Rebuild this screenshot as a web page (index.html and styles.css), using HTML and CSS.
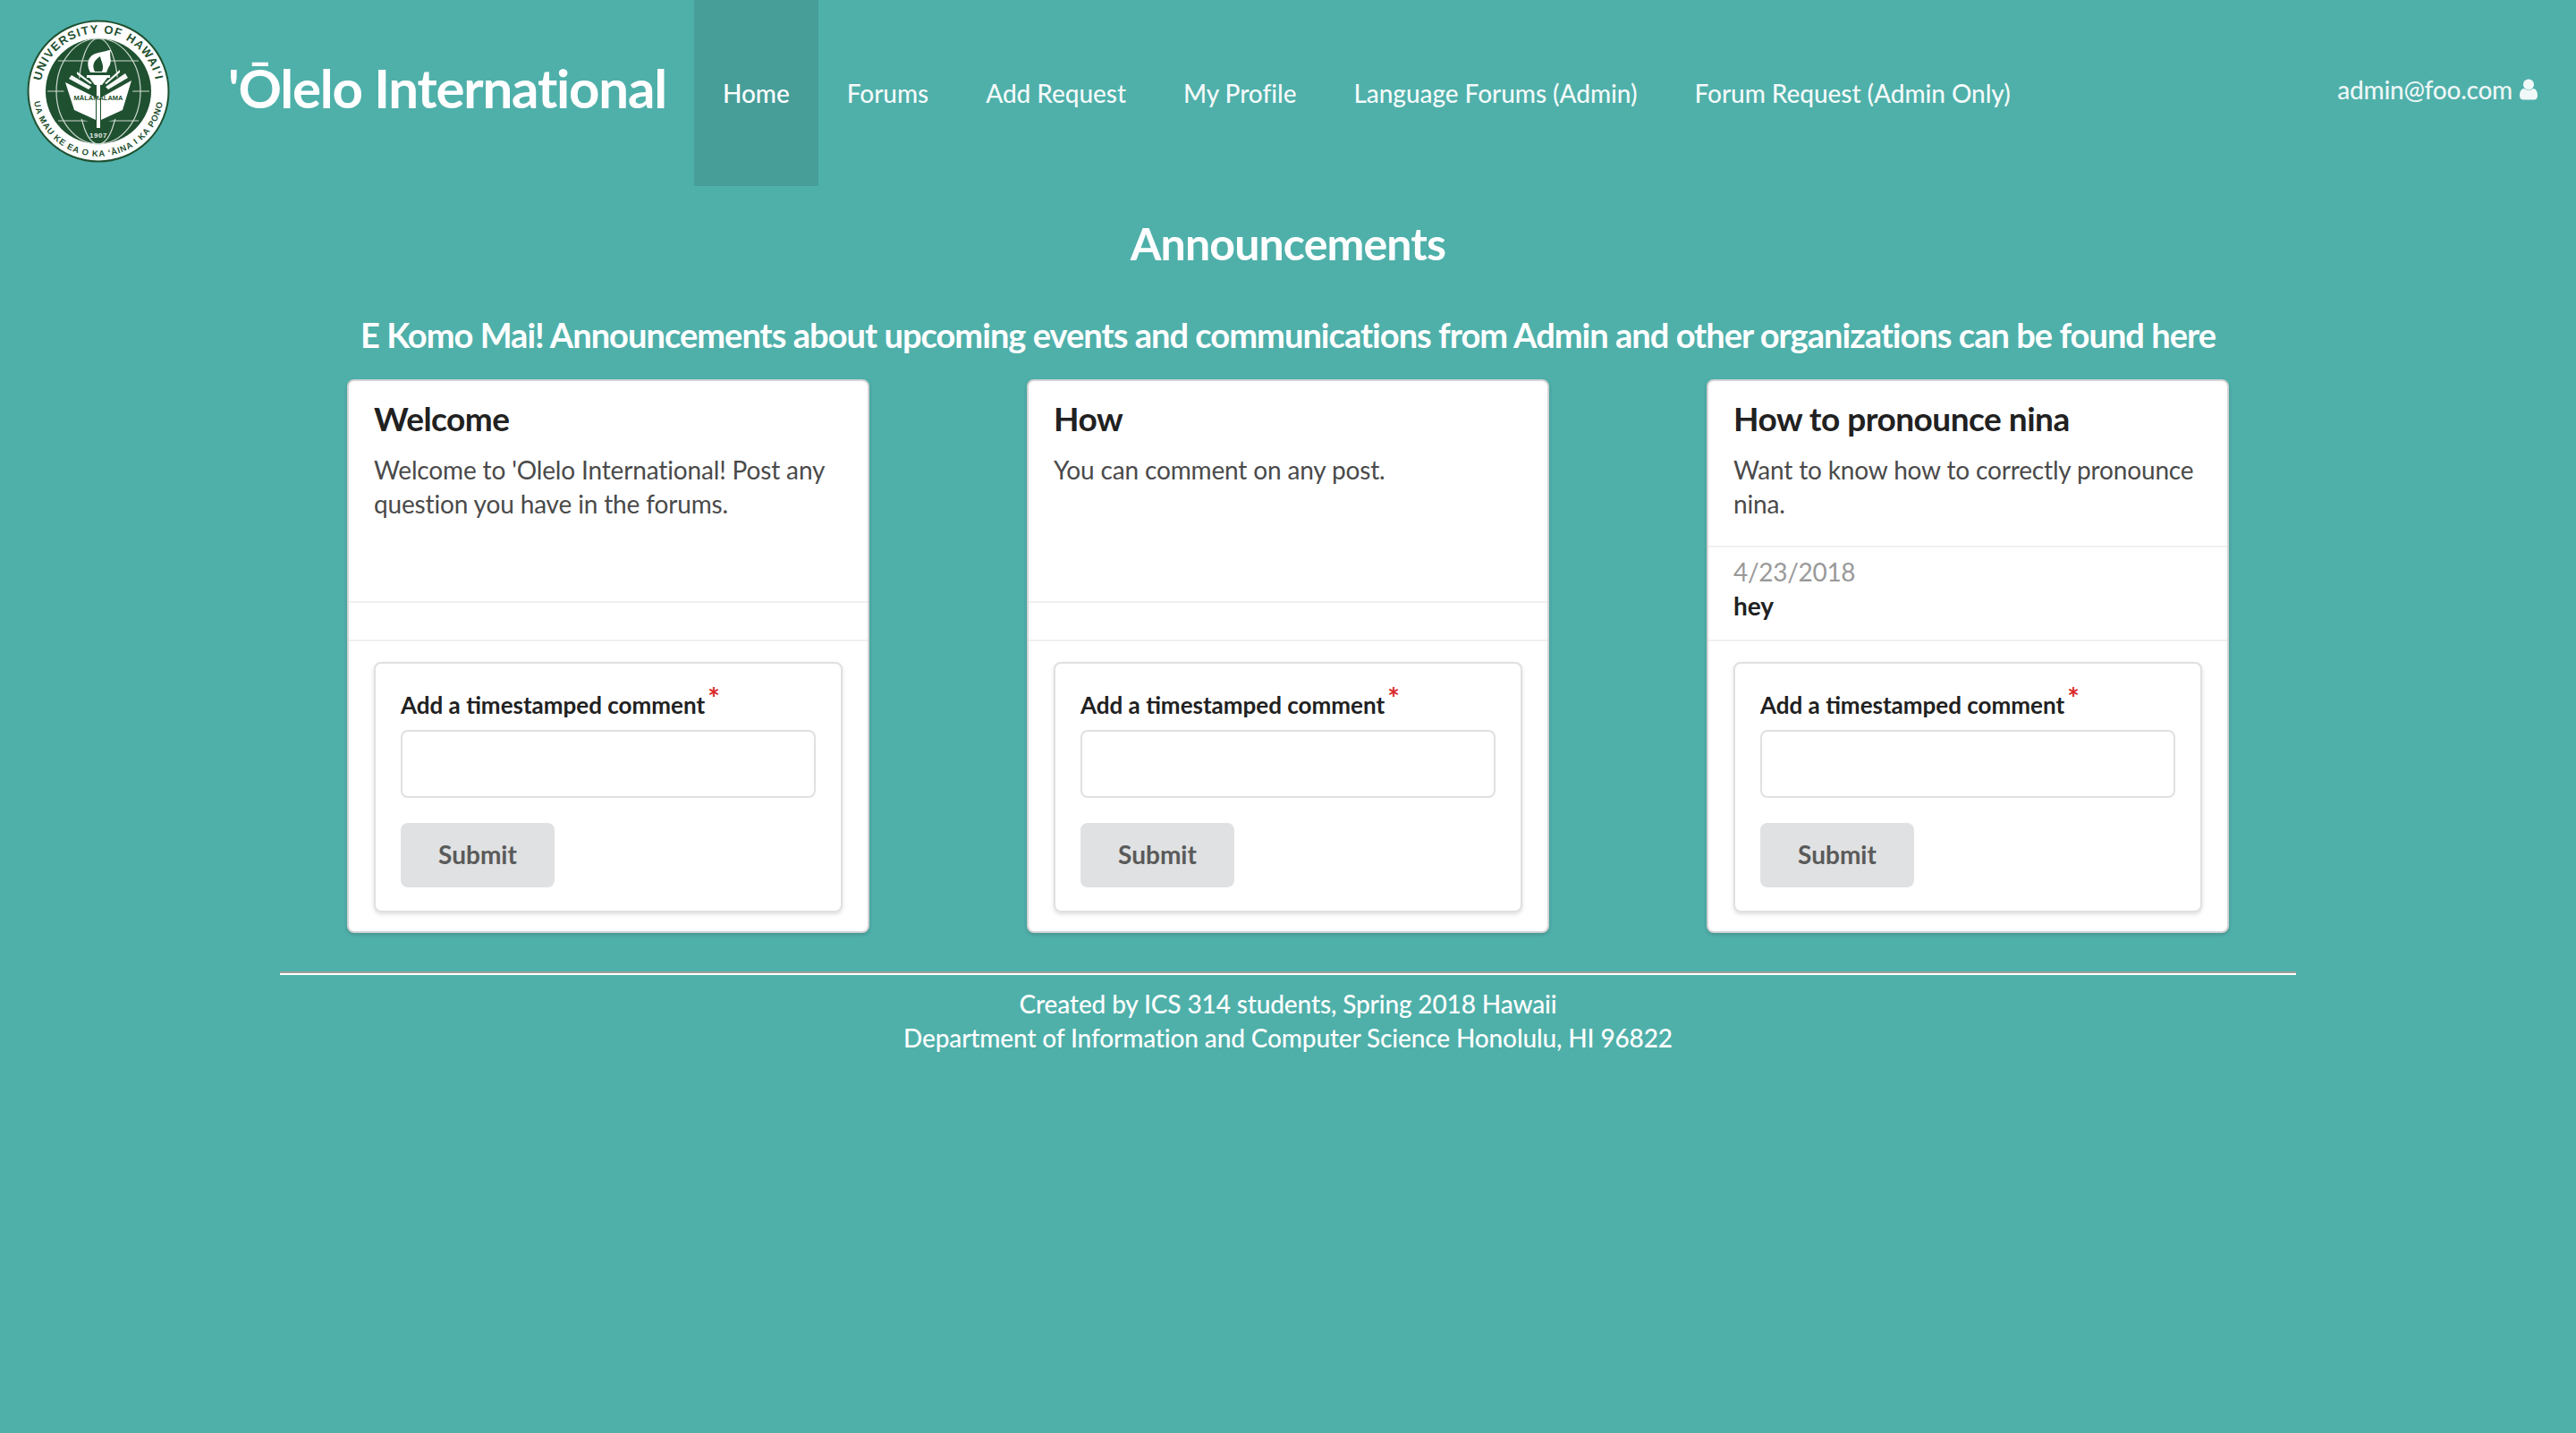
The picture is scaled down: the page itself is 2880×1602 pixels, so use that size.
FILE: index.html
```html
<!DOCTYPE html>
<html lang="en">
<head>
<meta charset="utf-8">
<title>'Ōlelo International</title>
<link rel="stylesheet" href="styles.css">
</head>
<body>
<nav class="navbar">
  <div class="brand">
    <svg class="seal" viewBox="0 0 160 160" width="160" height="160">
      <defs>
        <path id="arcTop" d="M15 80 A65 65 0 0 1 145 80"/>
        <path id="arcBottom" d="M7 80 A73 73 0 0 0 153 80"/>
      </defs>
      <circle cx="80" cy="80" r="78.500" fill="#fff" stroke="#1f5130" stroke-width="2"/>
      <circle cx="80" cy="80" r="59" fill="#1f5130"/>
      <text class="seal-text"><textPath href="#arcTop" startOffset="50%" text-anchor="middle">UNIVERSITY OF HAWAI‘I</textPath></text>
      <text class="seal-small"><textPath href="#arcBottom" startOffset="50%" text-anchor="middle">UA MAU KE EA O KA ‘ĀINA I KA PONO</textPath></text>
      <g fill="none" stroke="#cfdad2" stroke-width="1.200">
        <ellipse cx="80" cy="80" rx="47" ry="59"/>
        <ellipse cx="80" cy="80" rx="22" ry="59"/>
        <path d="M35 46H125M23 80H137M35 113H125"/>
      </g>
      <path fill="#1f5130" d="M38 66 L122 64 L112 106 L80 118 L48 106Z"/>
      <path fill="#fff" d="M43 70 L77 87 L77 112 L53 101Z M117 68 L83 87 L83 112 L107 101Z"/>
      <path fill="#f4f7f5" d="M50 62 L72 75 L69 78 L47 66Z M56 58 L73 71 L71 72 L56 61Z M110 60 L88 75 L91 78 L113 65Z M104 56 L87 71 L89 72 L104 59Z"/>
      <path fill="#fff" d="M78 72h4v49h-4z M67 62h26v3h-3l-6 8h-8l-6-8h-3z"/>
      <path fill="#fff" d="M71 59 C65 47 70 39 80 37 C86 36 90 34 94 34 C91 40 97 46 91 54 L89 59Z"/>
      <path fill="#1f5130" d="M76 58 C72 50 76 45 82 41 C83 47 87 51 84 58Z"/>
      <text class="seal-word" x="80" y="90">MĀLAMALAMA</text>
      <text class="seal-year" x="80" y="132">1907</text>
    </svg>
    <a class="title" href="#">'Ōlelo International</a>
  </div>
  <div class="menu">
    <a class="item active" href="#">Home</a>
    <a class="item" href="#">Forums</a>
    <a class="item" href="#">Add Request</a>
    <a class="item" href="#">My Profile</a>
    <a class="item" href="#">Language Forums (Admin)</a>
    <a class="item" href="#">Forum Request (Admin Only)</a>
  </div>
  <div class="user">
    <span>admin@foo.com</span>
    <svg class="user-icon" viewBox="0 0 20 24" width="20" height="24"><circle cx="10" cy="6.500" r="6"/><path d="M0 19c0-5 2-8 5-8 1.500 1.200 3 1.800 5 1.800s3.500-.6 5-1.800c3 0 5 3 5 8 0 3-2 4.500-4 4.500H4c-2 0-4-1.500-4-4.500z"/></svg>
  </div>
</nav>
<main class="content">
  <h1 class="page-title">Announcements</h1>
  <h2 class="page-sub">E Komo Mai! Announcements about upcoming events and communications from Admin and other organizations can be found here</h2>
  <div class="cards">
    <article class="card">
      <div class="card-main">
        <h3 class="card-title">Welcome</h3>
        <p class="card-desc">Welcome to 'Olelo International! Post any question you have in the forums.</p>
      </div>
      <div class="card-notes"></div>
      <div class="card-form">
        <form class="form-box">
          <label class="form-label">Add a timestamped comment<span class="req">*</span></label>
          <input class="form-input" type="text">
          <button class="submit" type="button">Submit</button>
        </form>
      </div>
    </article>
    <article class="card">
      <div class="card-main">
        <h3 class="card-title">How</h3>
        <p class="card-desc">You can comment on any post.</p>
      </div>
      <div class="card-notes"></div>
      <div class="card-form">
        <form class="form-box">
          <label class="form-label">Add a timestamped comment<span class="req">*</span></label>
          <input class="form-input" type="text">
          <button class="submit" type="button">Submit</button>
        </form>
      </div>
    </article>
    <article class="card">
      <div class="card-main card-main-short">
        <h3 class="card-title">How to pronounce nina</h3>
        <p class="card-desc">Want to know how to correctly pronounce nina.</p>
      </div>
      <div class="card-notes card-notes-full">
        <div class="note-date">4/23/2018</div>
        <div class="note-text">hey</div>
      </div>
      <div class="card-form">
        <form class="form-box">
          <label class="form-label">Add a timestamped comment<span class="req">*</span></label>
          <input class="form-input" type="text">
          <button class="submit" type="button">Submit</button>
        </form>
      </div>
    </article>
  </div>
  <footer class="footer">
    <div>Created by ICS 314 students, Spring 2018 Hawaii</div>
    <div>Department of Information and Computer Science Honolulu, HI 96822</div>
  </footer>
</main>
</body>
</html>
```

FILE: styles.css
```css
* { box-sizing: border-box; }
html, body { margin: 0; padding: 0; }
body {
  min-height: 1602px;
  background: #4fb0aa;
  font-family: Lato, "Liberation Sans", sans-serif;
  font-size: 28px;
  line-height: 38px;
  color: #fff;
}
a { color: inherit; text-decoration: none; }

.navbar { display: flex; align-items: stretch; height: 208px; padding-right: 43px; }
.brand { display: flex; align-items: flex-start; flex: 0 0 776px; }
.seal { margin: 22px 0 0 30px; flex: none; }
.seal-text { font-family: "Liberation Sans", sans-serif; font-size: 13px; font-weight: 700; fill: #1f5130; letter-spacing: 1.300px; }
.seal-small { font-family: "Liberation Sans", sans-serif; font-size: 9.500px; font-weight: 700; fill: #1f5130; letter-spacing: .9px; }
.seal-word { font-family: "Liberation Sans", sans-serif; font-size: 7.500px; font-weight: 700; fill: #1f5130; text-anchor: middle; }
.seal-year { font-family: "Liberation Sans", sans-serif; font-size: 8px; font-weight: 700; fill: #e6ece8; text-anchor: middle; letter-spacing: .5px; }
.title { margin: 60px 0 0 65px; font-size: 60px; line-height: 76px; font-weight: 700; letter-spacing: -1.200px; white-space: nowrap; }
.menu { display: flex; flex: 1; }
.item { display: flex; align-items: center; padding: 0 32px; white-space: nowrap; color: rgba(255,255,255,.94); font-weight: 500; letter-spacing: -.05px; }
.item.active { background: #479e99; color: #fff; }
.user { display: flex; align-items: center; gap: 8px; padding-bottom: 8px; color: rgba(255,255,255,.92); font-weight: 500; letter-spacing: -.25px; }
.user-icon { fill: currentColor; }

.content { display: flex; flex-direction: column; align-items: center; }
.page-title { margin: 28px 0 0; font-size: 50px; line-height: 72px; font-weight: 700; letter-spacing: -.85px; }
.page-sub { margin: 44px 0 0; font-size: 38px; line-height: 44px; font-weight: 700; letter-spacing: -.97px; }
.cards { display: grid; grid-template-columns: repeat(3, 584px); column-gap: 176px; margin-top: 28px; }
.card {
  display: flex; flex-direction: column; height: 619px;
  background: #fff; color: #212121; border: 2px solid #d4d4d5; border-radius: 8px;
  box-shadow: 0 2px 4px 0 rgba(34,36,38,.2);
}
.card-main { height: 248px; padding: 18px 28px 0; border-bottom: 2px solid #f0f0f0; }
.card-main-short { height: 186px; }
.card-title { margin: 0; font-size: 37px; line-height: 48px; font-weight: 700; letter-spacing: -.5px; }
.card-desc { margin: 14px 0 0; color: #4a4a4a; letter-spacing: -.15px; }
.card-notes { height: 43px; border-bottom: 2px solid #f0f0f0; }
.card-notes-full { height: 105px; padding: 8px 28px 0; }
.note-date { color: #999; letter-spacing: -.3px; }
.note-text { font-weight: 700; color: #212121; }
.card-form { padding: 23px 28px 0; }
.form-box { display: flex; flex-direction: column; align-items: flex-start; height: 280px; padding: 28px 28px 0; border: 2px solid #e0e0e0; border-radius: 8px; box-shadow: 0 2px 4px 0 rgba(34,36,38,.15); }
.form-label { font-size: 26px; line-height: 34px; font-weight: 700; color: #212121; }
.req { position: relative; top: -5px; margin-left: 3px; font-size: 32px; line-height: 1; color: #db2828; }
.form-input { width: 100%; height: 76px; margin-top: 11px; border: 2px solid #e0e0e0; border-radius: 8px; background: #fff; }
.submit { width: 172px; height: 72px; margin-top: 28px; padding: 0 0 2px; border: 0; border-radius: 8px; background: #e0e1e2; color: #5a5a5a; font: 700 28px Lato, sans-serif; }
.footer { width: 2254px; margin-top: 43px; padding-top: 15px; border-top: 2px solid #a0a0a0; box-shadow: inset 0 2px 0 #fff; text-align: center; font-weight: 500; letter-spacing: -.13px; }
```
